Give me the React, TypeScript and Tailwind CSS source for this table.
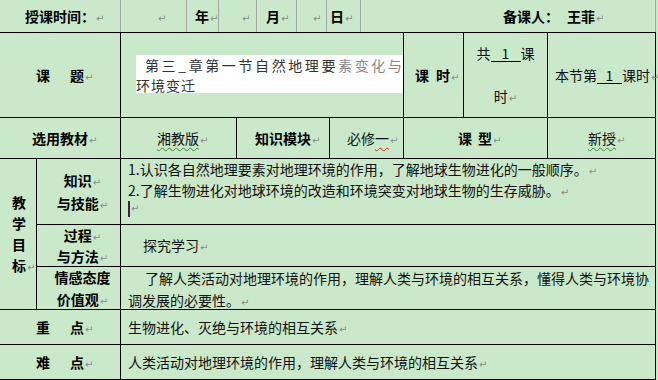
import React from "react";

const Ret = () => (
  <span className="ml-px font-['DejaVu_Sans',sans-serif] text-[10px] leading-none font-normal text-[#8c8c8c]">
    ↵
  </span>
);

const Blank = ({ w }: { w: string }) => (
  <span className={`inline-block border-b border-black text-center leading-[15px] ${w}`}>1</span>
);

const TopCell = ({
  w,
  children,
}: {
  w: string;
  children: React.ReactNode;
}) => (
  <div className={`flex items-center border-r border-[#a3a3a3] ${w}`}>
    <span className="whitespace-nowrap">{children}</span>
  </div>
);

function Goals() {
  return (
    <div className="flex h-[151px] border-b border-black">
      <div className="flex w-[37px] flex-col justify-center border-r border-black pl-[12px] font-bold leading-[21px]">
        <span>教</span>
        <span>学</span>
        <span>目</span>
        <span>
          标<Ret />
        </span>
      </div>

      <div className="flex w-[619px] flex-col">
        <div className="flex h-[66px] border-b border-black">
          <div className="flex w-[84px] flex-col items-center justify-center border-r border-black pl-[8px] font-bold leading-[23px]">
            <span>
              知识<Ret />
            </span>
            <span>
              与技能<Ret />
            </span>
          </div>
          <div className="w-[535px] border-r border-black pl-[7px] leading-[21px] text-[#111]">
            <p>1.认识各自然地理要素对地理环境的作用，了解地球生物进化的一般顺序。<Ret /></p>
            <p>2.了解生物进化对地球环境的改造和环境突变对地球生物的生存威胁。<Ret /></p>
            <p className="flex items-center">
              <span className="inline-block h-[16px] w-[2px] bg-[#4a1a4a]" />
              <Ret />
            </p>
          </div>
        </div>

        <div className="flex h-[42px] border-b border-black">
          <div className="flex w-[84px] flex-col items-center justify-center border-r border-black pl-[8px] font-bold leading-[21px]">
            <span>
              过程<Ret />
            </span>
            <span>
              与方法<Ret />
            </span>
          </div>
          <div className="flex w-[535px] items-center border-r border-black pl-[22px] text-[#111]">
            <span>
              探究学习<Ret />
            </span>
          </div>
        </div>

        <div className="flex h-[42px]">
          <div className="flex w-[84px] flex-col items-center justify-center border-r border-black pl-[8px] font-bold leading-[22px]">
            <span>情感态度</span>
            <span>
              价值观<Ret />
            </span>
          </div>
          <div className="w-[535px] border-r border-black pl-[7px] leading-[22px] text-[#111]">
            <p className="whitespace-nowrap pl-[17px]">
              了解人类活动对地理环境的作用，理解人类与环境的相互关系，懂得人类与环境协
            </p>
            <p>
              调发展的必要性。<Ret />
            </p>
          </div>
        </div>
      </div>
    </div>
  );
}

const Wavy = ({ color, children }: { color: string; children: React.ReactNode }) => (
  <span className={`underline decoration-wavy decoration-1 underline-offset-[3px] ${color}`}>{children}</span>
);

export default function App() {
  return (
    <div className="h-[380px] w-[658px] overflow-hidden bg-[#cae8ca] font-['Noto_Sans_CJK_SC','Liberation_Sans',sans-serif] text-[14px] text-black">
      <div className="w-[656px]">
        {/* top line */}
        <div className="flex h-[33px] border-b border-black font-bold">
          <TopCell w="w-[121px] pl-[25px]">
            授课时间：<Ret />
          </TopCell>
          <TopCell w="w-[66px] pl-[36px]">
            <Ret />
          </TopCell>
          <TopCell w="w-[32px] pl-[8px]">
            年<Ret />
          </TopCell>
          <TopCell w="w-[38px] pl-[22px]">
            <Ret />
          </TopCell>
          <TopCell w="w-[40px] pl-[9px]">
            月<Ret />
          </TopCell>
          <TopCell w="w-[30px] pl-[15px]">
            <Ret />
          </TopCell>
          <TopCell w="w-[34px] pl-[3px]">
            日<Ret />
          </TopCell>
          <TopCell w="w-[295px] pl-[142px]">
            备课人：<span className="ml-[8px]">王菲</span>
            <Ret />
          </TopCell>
        </div>

        {/* 课题 */}
        <div className="flex h-[85px] border-b border-black">
          <div className="flex w-[121px] items-center border-r border-black pl-[36px] font-bold">
            <span className="whitespace-nowrap">
              课<span className="ml-[20px]">题</span>
              <Ret />
            </span>
          </div>
          <div className="w-[283px] border-r border-black pl-[15px] pt-[22px]">
            <div className="h-[38px] w-[267px] whitespace-nowrap bg-white leading-[20px] text-[#333]">
              <div className="ml-[9px] tracking-[2.6px]">
                第三_章第一节自然地理要<span className="text-[#888]">素变化与</span>
              </div>
              <div className="tracking-[1px]">环境变迁</div>
            </div>
          </div>
          <div className="flex w-[60px] items-center border-r border-black pl-[11px] font-bold">
            <span className="whitespace-nowrap">
              课<span className="ml-[7px]">时</span>
              <Ret />
            </span>
          </div>
          <div className="flex w-[84px] flex-col items-center justify-center border-r border-black leading-[43px] text-[#111]">
            <span className="whitespace-nowrap">
              共<Blank w="w-[30px]" />课
            </span>
            <span>
              时<Ret />
            </span>
          </div>
          <div className="flex w-[108px] items-center border-r border-black pl-[7px] text-[#111]">
            <span className="whitespace-nowrap">
              本节第<Blank w="w-[25px]" />课时<Ret />
            </span>
          </div>
        </div>

        {/* 选用教材 */}
        <div className="flex h-[41px] border-b border-black">
          <div className="flex w-[121px] items-center border-r border-black pl-[32px] font-bold">
            <span className="whitespace-nowrap">
              选用教材<Ret />
            </span>
          </div>
          <div className="flex w-[116px] items-center border-r border-black pl-[36px] text-[#111]">
            <span className="whitespace-nowrap">
              <Wavy color="decoration-[#2e8b2e]">湘教版</Wavy>
              <Ret />
            </span>
          </div>
          <div className="flex w-[93px] items-center border-r border-black pl-[18px] font-bold">
            <span className="whitespace-nowrap">
              知识模块<Ret />
            </span>
          </div>
          <div className="flex w-[74px] items-center border-r border-black pl-[17px] text-[#111]">
            <span className="whitespace-nowrap">
              必修<Wavy color="decoration-[#e02020]">一</Wavy>
              <Ret />
            </span>
          </div>
          <div className="flex w-[144px] items-center border-r border-black pl-[54px] font-bold">
            <span className="whitespace-nowrap">
              课<span className="ml-[6px]">型</span>
              <Ret />
            </span>
          </div>
          <div className="flex w-[108px] items-center border-r border-black pl-[40px] text-[#111]">
            <span className="whitespace-nowrap">
              <Wavy color="decoration-[#2e8b2e]">新授</Wavy>
              <Ret />
            </span>
          </div>
        </div>

        <Goals />

        {/* 重点 / 难点 */}
        <div className="flex h-[35px] border-b border-black">
          <div className="flex w-[121px] items-center border-r border-black pl-[36px] font-bold">
            <span className="whitespace-nowrap">
              重<span className="ml-[20px]">点</span>
              <Ret />
            </span>
          </div>
          <div className="flex w-[535px] items-center border-r border-black pl-[7px] text-[#111]">
            <span>
              生物进化、灭绝与环境的相互关系<Ret />
            </span>
          </div>
        </div>
        <div className="flex h-[35px] border-b border-black">
          <div className="flex w-[121px] items-center border-r border-black pl-[36px] font-bold">
            <span className="whitespace-nowrap">
              难<span className="ml-[20px]">点</span>
              <Ret />
            </span>
          </div>
          <div className="flex w-[535px] items-center border-r border-black pl-[7px] text-[#111]">
            <span>
              人类活动对地理环境的作用，理解人类与环境的相互关系<Ret />
            </span>
          </div>
        </div>
      </div>
    </div>
  );
}
